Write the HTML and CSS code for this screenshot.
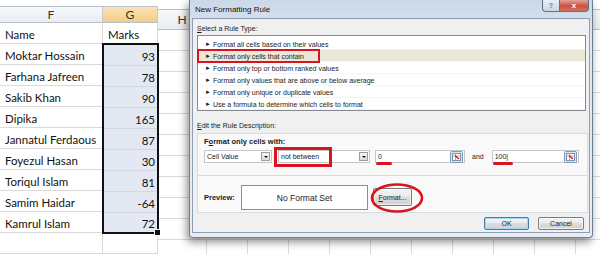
FILE: index.html
```html
<!DOCTYPE html>
<html lang="en">
<head>
    <meta charset="UTF-8">
    <title>New Formatting Rule</title>
    <link rel="stylesheet" href="styles.css">
</head>
<body>

<div class="sheet">
    <div class="col col-f">
        <div class="strip"></div>
        <div class="hdr">F</div>
        <div class="cell">Name</div>
        <div class="cell">Moktar Hossain</div>
        <div class="cell">Farhana Jafreen</div>
        <div class="cell">Sakib Khan</div>
        <div class="cell">Dipika</div>
        <div class="cell">Jannatul Ferdaous</div>
        <div class="cell">Foyezul Hasan</div>
        <div class="cell">Toriqul Islam</div>
        <div class="cell">Samim Haidar</div>
        <div class="cell">Kamrul Islam</div>
        <div class="cell"></div>
    </div>
    <div class="col col-g">
        <div class="strip"></div>
        <div class="hdr hdr-active">G</div>
        <div class="cell">Marks</div>
        <div class="sel">
            <div class="cell num">93</div>
            <div class="cell num">78</div>
            <div class="cell num">90</div>
            <div class="cell num">165</div>
            <div class="cell num">87</div>
            <div class="cell num">30</div>
            <div class="cell num">81</div>
            <div class="cell num">-64</div>
            <div class="cell num">72</div>
            <span class="handle"></span>
        </div>
        <div class="cell"></div>
    </div>
    <div class="col col-h">
        <div class="strip"></div>
        <div class="hdr">H</div>
        <div class="body-grid"></div>
    </div>
    <div class="col col-rest">
        <div class="strip"></div>
        <div class="hdr hdr-lines"></div>
        <div class="body-grid body-lines"></div>
    </div>
</div>

<div class="dialog">
    <div class="titlebar">
        <span class="title">New Formatting Rule</span>
        <div class="caption-btns">
            <span class="cap-help">?</span>
            <span class="cap-close">x</span>
        </div>
    </div>
    <div class="client">
        <div class="label"><u>S</u>elect a Rule Type:</div>
        <ul class="rule-list">
            <li><span class="tri">&#9658;</span>Format all cells based on their values</li>
            <li class="selected"><span class="tri">&#9658;</span>Format only cells that contain<span class="mark-rect"></span></li>
            <li><span class="tri">&#9658;</span>Format only top or bottom ranked values</li>
            <li><span class="tri">&#9658;</span>Format only values that are above or below average</li>
            <li><span class="tri">&#9658;</span>Format only unique or duplicate values</li>
            <li><span class="tri">&#9658;</span>Use a formula to determine which cells to format</li>
        </ul>

        <div class="label label-edit"><u>E</u>dit the Rule Description:</div>
        <div class="edit-box">
            <div class="section">
                <div class="bold">F<u>o</u>rmat only cells with:</div>
                <div class="controls">
                    <div class="combo combo-cell"><span class="combo-text">Cell Value</span><span class="arrow-btn"></span></div>
                    <div class="combo combo-op"><span class="combo-text">not between</span><span class="arrow-btn"></span></div>
                    <div class="field field-a">
                        <span class="combo-text">0</span>
                        <svg class="ref-icon" width="13" height="12" viewBox="0 0 13 12">
                            <rect x="0.5" y="0.5" width="12" height="11" rx="1" fill="#dbe5f1" stroke="#7f98b6"/>
                            <rect x="2.5" y="2.5" width="8" height="7" fill="#fff" stroke="#7a90ad"/>
                            <path d="M2.5 5h8M5.5 2.5v7" stroke="#9fb0c6"/>
                            <path d="M5 4.5l4 3.5" stroke="#d22222" stroke-width="1.6"/>
                        </svg>
                        <span class="mark-line line-a"></span>
                    </div>
                    <span class="and">and</span>
                    <div class="field field-b">
                        <span class="combo-text">100|</span>
                        <svg class="ref-icon" width="13" height="12" viewBox="0 0 13 12">
                            <rect x="0.5" y="0.5" width="12" height="11" rx="1" fill="#dbe5f1" stroke="#7f98b6"/>
                            <rect x="2.5" y="2.5" width="8" height="7" fill="#fff" stroke="#7a90ad"/>
                            <path d="M2.5 5h8M5.5 2.5v7" stroke="#9fb0c6"/>
                            <path d="M5 4.5l4 3.5" stroke="#d22222" stroke-width="1.6"/>
                        </svg>
                        <span class="mark-line line-b"></span>
                    </div>
                    <span class="mark-op"></span>
                </div>
            </div>
            <div class="preview-row">
                <span class="bold preview-label">Preview:</span>
                <div class="preview-box">No Format Set</div>
                <div class="format-wrap">
                    <button class="btn btn-format"><u>F</u>ormat...</button>
                    <svg class="mark-ellipse" width="56" height="32" viewBox="0 0 56 32">
                        <ellipse cx="27" cy="15" rx="25" ry="13.5" fill="none" stroke="#d9141e" stroke-width="2.6"/>
                    </svg>
                </div>
            </div>
        </div>
        <div class="buttons">
            <button class="btn btn-ok">OK</button>
            <button class="btn btn-cancel">Cancel</button>
        </div>
    </div>
</div>

</body>
</html>
```

FILE: styles.css
```css
body {
    margin: 0;
    width: 600px;
    height: 254px;
    overflow: hidden;
    position: relative;
    background: #fff;
    font-family: "Liberation Sans", Arial, sans-serif;
}

/* spreadsheet behind the dialog */

.sheet {
    display: flex;
    height: 254px;
    font-family: Lato, "Liberation Sans", sans-serif;
    font-size: 11.5px;
    color: #111;
}

.col {
    display: flex;
    flex-direction: column;
    flex-shrink: 0;
}

.col-f { width: 103px; }
.col-g { width: 55px; }
.col-h { width: 49px; }
.col-rest { flex: 1; }

.strip {
    height: 10px;
    box-sizing: border-box;
    border-bottom: 1px solid #b8c0ca;
    background: #fff;
}

.hdr {
    height: 20px;
    box-sizing: border-box;
    border-right: 1px solid #c8cdd3;
    border-bottom: 1px solid #b8c0ca;
    background: linear-gradient(#f7f8fa, #e9ecf0);
    color: #333;
    font-size: 12px;
    display: flex;
    align-items: center;
    justify-content: center;
}

.hdr-active {
    background: linear-gradient(#fae2b4, #f3cd88);
}

.hdr-lines {
    border-right: none;
    background:
        repeating-linear-gradient(to right, transparent 0 40px, #c8cdd3 40px 41px),
        linear-gradient(#f7f8fa, #e9ecf0);
}

.cell {
    height: 21px;
    flex-shrink: 0;
    box-sizing: border-box;
    border-right: 1px solid #dadada;
    border-bottom: 1px solid #dadada;
    padding: 0 5px 2px;
    display: flex;
    align-items: flex-end;
    white-space: nowrap;
}

.body-grid {
    flex: 1;
    border-right: 1px solid #dadada;
    background: repeating-linear-gradient(to bottom, transparent 0 20px, #dadada 20px 21px);
}

.body-lines {
    border-right: none;
    background:
        repeating-linear-gradient(to right, transparent 0 40px, #dadada 40px 41px),
        repeating-linear-gradient(to bottom, transparent 0 20px, #dadada 20px 21px);
}

.sel {
    position: relative;
    margin: -1px -1px -1px -1px;
    border: 2px solid #111;
    background: #e4e8f3;
    display: flex;
    flex-direction: column;
}

.sel .cell {
    border-right: none;
    border-bottom: 1px solid #d3d8e4;
    padding-right: 2px;
}

.sel .cell:last-of-type {
    height: 19px;
    border-bottom: none;
}

.num {
    justify-content: flex-end;
}

.handle {
    position: absolute;
    right: -4px;
    bottom: -4px;
    width: 5px;
    height: 5px;
    background: #111;
    border: 1px solid #fff;
}

/* dialog */

.dialog {
    position: absolute;
    left: 189px;
    top: 0;
    width: 404px;
    height: 238px;
    box-sizing: border-box;
    border: 1px solid #6e7e92;
    border-top: none;
    border-radius: 0 0 4px 4px;
    background: linear-gradient(#cbd8e8, #dfe7f1 40px, #e6edf5);
    padding: 0 2px 4px;
    box-shadow: -2px 4px 8px rgba(0, 0, 0, 0.45);
    display: flex;
    flex-direction: column;
    color: #1b1b1b;
    font-size: 7px;
}

.titlebar {
    height: 18px;
    display: flex;
    align-items: flex-start;
    flex-shrink: 0;
}

.title {
    font-size: 8px;
    margin: 5px 0 0 3px;
    color: #111;
}

.caption-btns {
    margin-left: auto;
    margin-right: 1px;
    display: flex;
}

.cap-help,
.cap-close {
    height: 12px;
    box-sizing: border-box;
    border: 1px solid #5f7088;
    border-top: none;
    display: flex;
    align-items: center;
    justify-content: center;
    font-size: 7px;
    font-weight: bold;
}

.cap-help {
    width: 17px;
    border-right: none;
    border-radius: 0 0 0 4px;
    background: linear-gradient(#e7eef6, #c9d6e5);
    color: #6a7c92;
}

.cap-close {
    width: 30px;
    border-radius: 0 0 4px 0;
    background: linear-gradient(#e3a295, #c9513f 55%, #d5745f);
    color: #fff;
    font-size: 8px;
}

.client {
    height: 215px;
    box-sizing: border-box;
    border: 1px solid #8d9db2;
    background: #f0f0f0;
    display: flex;
    flex-direction: column;
}

.label {
    height: 10px;
    line-height: 10px;
    margin: 5px 0 0 4px;
}

.label-edit {
    margin-top: 10px;
}

.rule-list {
    list-style: none;
    margin: 1px 3px 0 4px;
    padding: 2px 0 0;
    height: 76px;
    box-sizing: border-box;
    border: 1px solid #838a94;
    background: #fff;
}

.rule-list li {
    position: relative;
    height: 12px;
    line-height: 12px;
    padding-left: 7px;
    white-space: nowrap;
    border-bottom: 1px solid #f4f4f4;
    box-sizing: border-box;
}

.rule-list li.selected {
    background: #ebe8d9;
}

.tri {
    font-size: 6px;
    margin-right: 2px;
    vertical-align: 1px;
}

.mark-rect {
    position: absolute;
    left: -1px;
    top: -1px;
    width: 123px;
    height: 14px;
    box-sizing: border-box;
    border: 2px solid #d9141e;
}

.edit-box {
    margin: 2px 1px 0 4px;
    height: 80px;
    box-sizing: border-box;
    border: 1px solid #d3dbe3;
    background: #f9f9f9;
    display: flex;
    flex-direction: column;
}

.section {
    height: 42px;
    box-sizing: border-box;
    border-bottom: 1px solid #d3dbe3;
    padding: 3px 0 0 6px;
}

.bold {
    font-weight: bold;
    font-size: 7.5px;
    line-height: 10px;
    height: 10px;
}

.controls {
    position: relative;
    margin-top: 3px;
    height: 13px;
    display: flex;
    align-items: center;
}

.combo,
.field {
    position: relative;
    height: 13px;
    box-sizing: border-box;
    border: 1px solid #c3c7cc;
    background: #fff;
    display: flex;
    align-items: center;
    padding: 0 1px 0 2px;
}

.combo-text {
    flex: 1;
    white-space: nowrap;
}

.combo-cell { width: 68px; }
.combo-op { width: 92px; margin-left: 6px; }
.field-a { width: 90px; margin-left: 5px; }
.field-b { width: 87px; margin-left: 8px; }

.and {
    margin-left: 7px;
}

.arrow-btn {
    width: 9px;
    height: 9px;
    box-sizing: border-box;
    border: 1px solid #9a9da2;
    background: linear-gradient(#f6f6f6, #dcdcdc);
    display: flex;
    align-items: center;
    justify-content: center;
}

.arrow-btn::after {
    content: "";
    border-left: 2px solid transparent;
    border-right: 2px solid transparent;
    border-top: 2px solid #111;
}

.ref-icon {
    display: block;
}

.mark-line {
    position: absolute;
    top: 11px;
    left: 0;
    height: 3px;
    border-radius: 2px;
    background: #d9141e;
}

.line-a { width: 16px; }
.line-b { width: 20px; }

.mark-op {
    position: absolute;
    left: 70px;
    top: -3px;
    width: 58px;
    height: 20px;
    box-sizing: border-box;
    border: 3px solid #d9141e;
}

.preview-row {
    flex: 1;
    display: flex;
    align-items: flex-start;
    padding: 9px 0 0 6px;
}

.preview-label {
    margin-top: 8px;
    width: 37px;
}

.preview-box {
    width: 127px;
    height: 25px;
    box-sizing: border-box;
    border: 1px solid #8e8e8e;
    background: #fff;
    display: flex;
    align-items: center;
    justify-content: center;
    font-size: 8.5px;
}

.format-wrap {
    position: relative;
    margin: 3px 0 0 5px;
}

.btn {
    font-family: "Liberation Sans", Arial, sans-serif;
    font-size: 7px;
    color: #1b1b1b;
    padding: 0;
    border: 1px solid #7a7a7a;
    border-radius: 2px;
    background: linear-gradient(#f3f3f3, #ececec 45%, #dddddd 50%, #d0d0d0);
    box-shadow: inset 0 0 0 1px rgba(255, 255, 255, 0.7);
}

.btn-format {
    width: 39px;
    height: 18px;
}

.mark-ellipse {
    position: absolute;
    left: -3px;
    top: -5px;
}

.buttons {
    display: flex;
    justify-content: flex-end;
    gap: 9px;
    margin-top: 4px;
    padding-right: 5px;
}

.buttons .btn {
    height: 13px;
}

.btn-ok {
    width: 45px;
    border-color: #3c7fb1;
    box-shadow: inset 0 0 0 1px #a6d9f4;
}

.btn-cancel {
    width: 46px;
}
```
